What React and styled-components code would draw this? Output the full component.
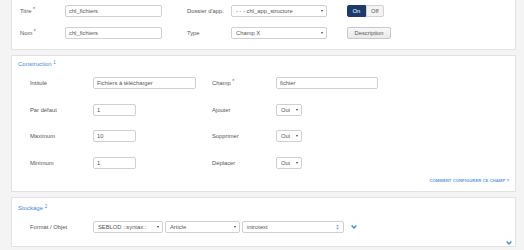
import React from 'react';
import styled, { createGlobalStyle } from 'styled-components';

const GlobalStyle = createGlobalStyle`
  html, body {
    margin: 0;
    padding: 0;
    background: #f4f4f4;
  }
  body {
    width: 524px;
    height: 250px;
    overflow: hidden;
    font-family: 'Liberation Sans', Arial, sans-serif;
    color: #555;
  }
`;

const Page = styled.div`
  display: flex;
  flex-direction: column;
  gap: 5px;
  padding: 0 8px 0 11px;
`;

const Panel = styled.section`
  background: #fff;
  border: 1px solid #e2e2e2;
  border-top: ${p => (p.$cut ? 'none' : '1px solid #e2e2e2')};
  padding: ${p => p.$pad};
`;

const Grid = styled.div`
  display: grid;
  grid-template-columns: ${p => p.$cols};
  grid-auto-rows: 12px;
  row-gap: ${p => p.$rowGap}px;
  padding-left: ${p => p.$left}px;
  align-items: center;
`;

const Label = styled.div`
  font-size: 5.8px;
  color: #555;
  white-space: nowrap;

  sup {
    font-size: 5px;
    vertical-align: 2px;
    line-height: 0;
  }
`;

const Input = styled.div`
  box-sizing: border-box;
  width: ${p => p.$w}px;
  height: 12px;
  border: 1px solid #d0d0d0;
  border-radius: 2px;
  background: #fff;
  padding: 0 3px;
  display: flex;
  align-items: center;
  font-size: 5.8px;
  color: #555;
  white-space: nowrap;
  overflow: hidden;
`;

const Select = styled(Input)`
  justify-content: space-between;
  padding: 0 3px 0 4px;
`;

const Caret = styled.span`
  width: 0;
  height: 0;
  border-left: 1.5px solid transparent;
  border-right: 1.5px solid transparent;
  border-top: 2.5px solid #444;
`;

const Spinner = styled.svg`
  width: 3px;
  height: 6px;
  margin-right: 1px;
`;

const Toggle = styled.div`
  display: flex;
  height: 12px;
  width: 37px;
  font-size: 5.8px;
`;

const ToggleSide = styled.div`
  box-sizing: border-box;
  flex: 1;
  display: flex;
  align-items: center;
  justify-content: center;
  background: ${p => (p.$active ? '#1d3a6c' : '#f3f3f3')};
  color: ${p => (p.$active ? '#fff' : '#555')};
  border: 1px solid ${p => (p.$active ? '#1d3a6c' : '#d2d2d2')};
  border-radius: ${p => (p.$active ? '2px 0 0 2px' : '0 2px 2px 0')};
`;

const Button = styled.div`
  box-sizing: border-box;
  width: 44px;
  height: 12px;
  display: flex;
  align-items: center;
  justify-content: center;
  background: linear-gradient(#f8f8f8, #e9e9e9);
  border: 1px solid #c8c8c8;
  border-radius: 2px;
  font-size: 5.8px;
  color: #555;
`;

const Title = styled.div`
  font-size: 6px;
  line-height: 8px;
  color: #3f8ae0;
  padding-left: 6px;
  margin-bottom: ${p => p.$mb}px;

  sup {
    font-size: 4.5px;
    vertical-align: 2px;
    line-height: 0;
  }
`;

const HelpLink = styled.div`
  text-align: right;
  padding-right: 6px;
  margin-top: 9px;
  font-size: 4.2px;
  line-height: 6px;
  font-weight: 700;
  color: #5b9be6;
  letter-spacing: 0.05px;
`;

const Fields = styled.div`
  display: flex;
  align-items: center;
  gap: 2px;
`;

const Chevron = styled.svg`
  width: 6px;
  height: 4px;
  margin-left: ${p => p.$ml || 0}px;
`;

const Footer = styled.div`
  display: flex;
  justify-content: flex-end;
  padding-right: 3px;
  margin-top: 8px;
  height: 4px;
`;

const ChevronIcon = ({ ml }) => (
  <Chevron $ml={ml} viewBox="0 0 6 4">
    <path d="M0.6 0.6 L3 3 L5.4 0.6" fill="none" stroke="#3f8ae0" strokeWidth="1.4" />
  </Chevron>
);

const SelectBox = ({ w, children, spinner }) => (
  <Select $w={w}>
    <span>{children}</span>
    {spinner ? (
      <Spinner viewBox="0 0 3 6">
        <path d="M0 2.2 L1.5 0.6 L3 2.2 Z M0 3.8 L1.5 5.4 L3 3.8 Z" fill="#7a9fcf" />
      </Spinner>
    ) : (
      <Caret />
    )}
  </Select>
);

const topCols = '45px 122px 44px 116px auto';
const buildCols = '63px 119px 64px auto';

export default function App() {
  return (
    <>
      <GlobalStyle />
      <Page>
        <Panel $cut $pad="5px 0 10px 0">
          <Grid $cols={topCols} $rowGap={10} $left={8}>
            <Label>Titre <sup>*</sup></Label>
            <Input $w={97}>chl_fichiers</Input>
            <Label>Dossier d'app.</Label>
            <SelectBox w={96}>- - - chl_app_structure</SelectBox>
            <Toggle>
              <ToggleSide $active>On</ToggleSide>
              <ToggleSide>Off</ToggleSide>
            </Toggle>

            <Label>Nom <sup>*</sup></Label>
            <Input $w={97}>chl_fichiers</Input>
            <Label>Type</Label>
            <SelectBox w={96}>Champ X</SelectBox>
            <Button>Description</Button>
          </Grid>
        </Panel>

        <Panel $pad="4px 0 7px 0">
          <Title $mb={9}>Construction <sup>1</sup></Title>
          <Grid $cols={buildCols} $rowGap={14.5} $left={18}>
            <Label>Intitulé</Label>
            <Input $w={103}>Fichiers à télécharger</Input>
            <Label>Champ <sup>*</sup></Label>
            <Input $w={102}>fichier</Input>

            <Label>Par défaut</Label>
            <Input $w={43}>1</Input>
            <Label>Ajouter</Label>
            <SelectBox w={26}>Oui</SelectBox>

            <Label>Maximum</Label>
            <Input $w={43}>10</Input>
            <Label>Supprimer</Label>
            <SelectBox w={26}>Oui</SelectBox>

            <Label>Minimum</Label>
            <Input $w={43}>1</Input>
            <Label>Déplacer</Label>
            <SelectBox w={26}>Oui</SelectBox>
          </Grid>
          <HelpLink>COMMENT CONFIGURER CE CHAMP ?</HelpLink>
        </Panel>

        <Panel $pad="6px 0 1px 0">
          <Title $mb={9}>Stockage <sup>2</sup></Title>
          <Grid $cols="63px auto" $rowGap={0} $left={18}>
            <Label>Format / Objet</Label>
            <Fields>
              <SelectBox w={70}>SEBLOD ::syntax::</SelectBox>
              <SelectBox w={75}>Article</SelectBox>
              <SelectBox w={102} spinner>introtext</SelectBox>
              <ChevronIcon ml={5} />
            </Fields>
          </Grid>
          <Footer>
            <ChevronIcon />
          </Footer>
        </Panel>
      </Page>
    </>
  );
}
